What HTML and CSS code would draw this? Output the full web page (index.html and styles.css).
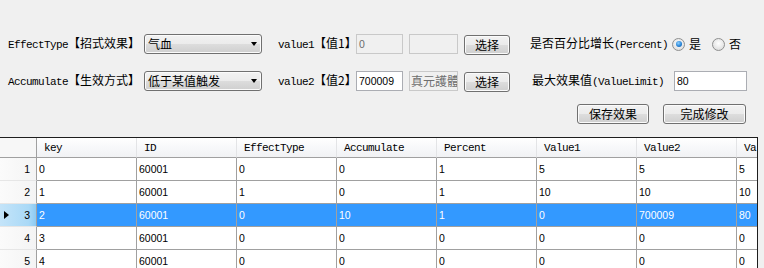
FILE: index.html
```html
<!DOCTYPE html>
<html>
<head>
<meta charset="utf-8">
<link rel="stylesheet" href="styles.css">
</head>
<body>
<div class="panel">
  <div class="row r1">
    <div class="lbl w-l1"><span class="lat">EffectType</span>【招式效果】</div>
    <div class="combo"><span class="ctext">气血</span><i class="arrow"></i></div>
    <div class="lbl w-l2 ml16"><span class="lat">value1</span>【值1】</div>
    <div class="tb dis w47">0</div>
    <div class="tb dis w49 ml6"></div>
    <button class="btn w46 ml6">选择</button>
    <div class="lbl w-l3 ml20">是否百分比增长<span class="lat">(Percent)</span></div>
    <span class="radio on"></span>
    <span class="rtext">是</span>
    <span class="radio ml11"></span>
    <span class="rtext">否</span>
  </div>
  <div class="row r2">
    <div class="lbl w-l1"><span class="lat">Accumulate</span>【生效方式】</div>
    <div class="combo"><span class="ctext">低于某值触发</span><i class="arrow"></i></div>
    <div class="lbl w-l2 ml16"><span class="lat">value2</span>【值2】</div>
    <div class="tb w47">700009</div>
    <div class="tb dis w49 ml6 clip">真元護體</div>
    <button class="btn w46 ml6">选择</button>
    <div class="lbl w-l4 ml22">最大效果值<span class="lat">(ValueLimit)</span></div>
    <div class="tb w73">80</div>
  </div>
  <div class="row r3">
    <button class="btn w72">保存效果</button>
    <button class="btn w83 ml14">完成修改</button>
  </div>
</div>
<div class="grid">
  <table>
    <colgroup>
      <col class="c-rh"><col class="c"><col class="c"><col class="c"><col class="c"><col class="c"><col class="c"><col class="c"><col class="c">
    </colgroup>
    <thead>
      <tr><th class="rh"></th><th>key</th><th>ID</th><th>EffectType</th><th>Accumulate</th><th>Percent</th><th>Value1</th><th>Value2</th><th>ValueLimit</th></tr>
    </thead>
    <tbody>
      <tr><td class="rh">1</td><td>0</td><td>60001</td><td>0</td><td>0</td><td>1</td><td>5</td><td>5</td><td>5</td></tr>
      <tr><td class="rh">2</td><td>1</td><td>60001</td><td>1</td><td>0</td><td>1</td><td>10</td><td>10</td><td>10</td></tr>
      <tr class="sel"><td class="rh"><i class="tri"></i>3</td><td>2</td><td>60001</td><td>0</td><td>10</td><td>1</td><td>0</td><td>700009</td><td>80</td></tr>
      <tr><td class="rh">4</td><td>3</td><td>60001</td><td>0</td><td>0</td><td>0</td><td>0</td><td>0</td><td>0</td></tr>
      <tr><td class="rh">5</td><td>4</td><td>60001</td><td>0</td><td>0</td><td>0</td><td>0</td><td>0</td><td>0</td></tr>
    </tbody>
  </table>
</div>
</body>
</html>
```

FILE: styles.css
```css
* { box-sizing: border-box; }
html, body { margin: 0; padding: 0; }
body {
  width: 764px;
  height: 268px;
  overflow: hidden;
  background: #f0f0f0;
  font-family: "Noto Sans CJK SC", sans-serif;
  font-size: 12px;
  color: #000;
}
.panel {
  height: 137px;
  padding: 34px 0 0 8px;
  display: flex;
  flex-direction: column;
}
.row {
  display: flex;
  align-items: center;
  height: 20px;
}
.r2 { margin-top: 17px; }
.r3 { margin-top: 12px; padding-left: 569px; }

.lbl {
  white-space: nowrap;
  font-size: 12px;
  line-height: 20px;
  flex: none;
}
.lat {
  font-family: "Liberation Mono", monospace;
  font-size: 11px;
  letter-spacing: -0.6px;
}
.w-l1 { width: 136px; }
.w-l2 { width: 78px; }
.w-l3 { width: 142px; }
.w-l4 { width: 142px; }
.ml6 { margin-left: 6px; }
.ml11 { margin-left: 11px; }
.ml14 { margin-left: 14px; }
.ml16 { margin-left: 16px; }
.ml20 { margin-left: 20px; }
.ml22 { margin-left: 22px; }

.combo {
  flex: none;
  position: relative;
  width: 118px;
  height: 20px;
  border: 1px solid #707070;
  border-radius: 3px;
  background: linear-gradient(#f2f2f2 0%, #ebebeb 50%, #dddddd 50%, #cfcfcf 100%);
  box-shadow: inset 0 0 0 1px #fbfbfb;
  padding-left: 3px;
  line-height: 18px;
  font-size: 12px;
}
.arrow {
  position: absolute;
  right: 4px;
  top: 7px;
  width: 0;
  height: 0;
  border-left: 3.5px solid transparent;
  border-right: 3.5px solid transparent;
  border-top: 4px solid #000;
}

.tb {
  flex: none;
  height: 20px;
  border: 1px solid #abadb3;
  border-top-color: #abadb3;
  background: #fff;
  font-family: "Liberation Sans", sans-serif;
  font-size: 10.5px;
  line-height: 18px;
  padding-left: 2px;
  white-space: nowrap;
  overflow: hidden;
}
.tb.dis {
  background: #f0f0f0;
  border-color: #c9c9c9;
  color: #6d6d6d;
}
.tb.clip {
  font-family: "Noto Sans CJK SC", sans-serif;
  font-size: 12px;
  color: #6d6d6d;
  padding-left: 1px;
}
.w47 { width: 47px; }
.w49 { width: 49px; }
.w73 { width: 73px; }

.btn {
  flex: none;
  height: 20px;
  margin-top: 1px;
  border: 1px solid #707070;
  border-radius: 3px;
  background: linear-gradient(#f2f2f2 0%, #ebebeb 50%, #dddddd 50%, #cfcfcf 100%);
  box-shadow: inset 0 0 0 1px #fbfbfb;
  font-family: "Noto Sans CJK SC", sans-serif;
  font-size: 12px;
  line-height: 16px;
  padding: 0;
  color: #000;
}
.w46 { width: 46px; }
.w72 { width: 72px; }
.w83 { width: 83px; }

.radio {
  flex: none;
  width: 13px;
  height: 13px;
  border-radius: 50%;
  border: 1px solid #8e8f8f;
  background: radial-gradient(circle at 50% 40%, #ffffff 0%, #e6e6e6 60%, #d4d4d4 100%);
  position: relative;
}
.radio.on::after {
  content: "";
  position: absolute;
  left: 2.5px;
  top: 2.5px;
  width: 6px;
  height: 6px;
  border-radius: 50%;
  background: radial-gradient(circle at 40% 35%, #8fd0ff 0%, #2a86d8 55%, #0f4f9a 100%);
}
.rtext {
  margin-left: 4px;
  font-size: 12px;
  line-height: 20px;
}

.grid {
  width: 758px;
  height: 131px;
  border-top: 1px solid #1e1e1e;
  border-right: 1px solid #1e1e1e;
  background: #fff;
  overflow: hidden;
}
table {
  border-collapse: separate;
  border-spacing: 0;
  table-layout: fixed;
  width: 837px;
}
col.c-rh { width: 37px; }
col.c { width: 100px; }
th, td {
  padding: 0;
  white-space: nowrap;
  overflow: hidden;
  text-align: left;
}
th {
  height: 20px;
  font-family: "Liberation Mono", monospace;
  font-size: 11px;
  letter-spacing: -0.6px;
  font-weight: normal;
  padding-left: 7px;
  background: linear-gradient(#ffffff 0%, #f7f8fa 50%, #f1f2f4 100%);
  border-right: 1px solid #e3e4e6;
  border-bottom: 1px solid #a0a0a0;
  line-height: 18px;
}
th.rh {
  background: #f7f7f7;
  border-right: 1px solid #a0a0a0;
}
td {
  height: 23px;
  font-family: "Liberation Sans", sans-serif;
  font-size: 10.5px;
  padding-left: 2px;
  border-right: 1px solid #a0a0a0;
  border-bottom: 1px solid #a0a0a0;
  line-height: 22px;
  background: #fff;
}
td.rh {
  text-align: right;
  padding: 0 6px 0 0;
  background: linear-gradient(90deg, #fbfbfb 0%, #f4f4f4 100%);
  border-bottom: 1px solid #e6e6e6;
  border-right: 1px solid #a0a0a0;
  position: relative;
}
tr.sel td {
  background: #3399ff;
  color: #fff;
}
tr.sel td.rh {
  background: linear-gradient(90deg, #c4e4f9 0%, #a9d9f7 80%, #8ccaf2 100%);
  color: #000;
}
.tri {
  position: absolute;
  left: 4px;
  top: 7px;
  width: 0;
  height: 0;
  border-top: 4.5px solid transparent;
  border-bottom: 4.5px solid transparent;
  border-left: 5px solid #000;
}
```
